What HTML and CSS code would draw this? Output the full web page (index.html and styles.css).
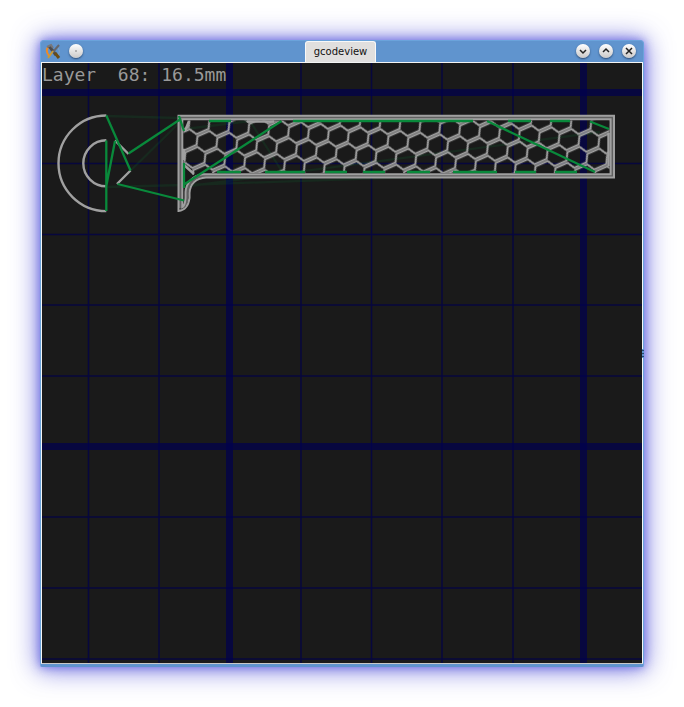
FILE: index.html
```html
<!DOCTYPE html>
<html lang="en">
<head>
<meta charset="utf-8">
<meta name="viewport" content="width=device-width, initial-scale=1">
<title>gcodeview</title>
<link rel="stylesheet" href="styles.css">
</head>
<body>
<main class="window">
  <header class="titlebar">
    <div class="controls">
      <button class="app-menu" type="button" aria-label="Window menu">
        <svg viewBox="0 0 16 16" width="16" height="16">
          <path d="M4 3C1 6 1 9 4 13" fill="none" stroke="#f08a24" stroke-width="2"/>
          <path d="M12 4c3 3 3 6 0 9" fill="none" stroke="#8fa6b8" stroke-width="1"/>
          <path d="M4 3l7 9" stroke="#4b4c50" stroke-width="3"/>
          <path d="M10 10l4 5" stroke="#6b4d14" stroke-width="3"/>
          <path d="M14 2L8 9" stroke="#66666a" stroke-width="2"/>
          <path d="M8 8l-5 7" stroke="#c99a35" stroke-width="2"/>
          <path d="M2 4l4-2 2 3" fill="none" stroke="#77777a" stroke-width="2"/>
        </svg>
      </button>
      <button class="round" type="button" aria-label="Pin">
        <svg viewBox="0 0 14 14" width="14" height="14"><rect x="6.500" y="6.500" width="1" height="1" fill="#222"/></svg>
      </button>
    </div>
    <h1 class="tab">gcodeview</h1>
    <div class="controls controls-end">
      <button class="round" type="button" aria-label="Minimize">
        <svg viewBox="0 0 14 14" width="14" height="14"><path d="M4 6l3 3 3-3"/></svg>
      </button>
      <button class="round" type="button" aria-label="Maximize">
        <svg viewBox="0 0 14 14" width="14" height="14"><path d="M4 8l3-3 3 3"/></svg>
      </button>
      <button class="round" type="button" aria-label="Close">
        <svg viewBox="0 0 14 14" width="14" height="14"><path d="M4 4l6 6M10 4l-6 6"/></svg>
      </button>
    </div>
  </header>
  <section class="viewport">
    <svg class="plot" viewBox="42 63 600 600" role="img" aria-label="Toolpath of the current layer">
      <defs>
        <!-- Honeycomb infill: two mirrored zigzag passes per tile -->
        <pattern id="comb" patternUnits="userSpaceOnUse" width="34.9" height="19.4" patternTransform="translate(298.5 132.6) rotate(-24) translate(-17.45 -9.7)">
          <path class="fill-line" transform="translate(17.45 9.7)" d="M-18-1.3H-10.8L-6.7-8.4H6.7L10.8-1.3H18M-18 1.3H-10.8L-6.7 8.4H6.7L10.8 1.3H18"/>
        </pattern>
      </defs>
      <g class="grid">
        <path class="minor" d="M88.500 63V663M159 63V663M301 63V663M371.500 63V663M442 63V663M513 63V663M42 163.500H642M42 234.500H642M42 305H642M42 376H642M42 517H642M42 588H642M42 659H642"/>
        <path class="major" d="M229.500 63V663M583.500 63V663"/>
        <path class="major" d="M42 92.500H642M42 446.500H642"/>
      </g>
      <path class="travel faint" d="M106 116L179 118M117 184L180 122M106 187L184 185L440 176M190 186L600 132M250 121L283 173M185 129L250 121"/>
      <path d="M183.500 120.500H609.500V173H204Q197 173 193 175L183.500 164Z" fill="url(#comb)"/>
      <g class="shell">
        <path class="band" d="M180.300 208V117.400H612.300V175.800H205C193 176 187 183 187 196Q187 206 180.300 208"/>
        <path d="M178.500 115.700H614V177.500H206C196 178 190 184 189.500 193V198Q188 210 178.500 211Z"/>
        <path d="M182.300 119.200H610.600V174.200H203C192 175 186 184 185.500 192V198Q185 206 182.300 207Z"/>
      </g>
      <g class="extrude">
        <path d="M106.300 115.500A47.800 47.800 0 0 0 106.300 211.100M106.300 140.300A23 23 0 0 0 106.300 186.300"/>
        <path d="M115 140.500L128.500 154M130.500 170.500L117 184M247 121.500H274M185 131L189 121M184 165L194 174M184 149V160M608.500 133V166"/>
      </g>
      <g class="travel">
        <path d="M106.300 115.500L130.500 170.500M106.300 140.500V211M106.300 186L115 141M128.500 153.500L180 119.500M117.500 184L184 200.500M179 116L184 131M184 163V188M184 184.500L281.500 121M487 121L595 172M590 121.500L609 129"/>
        <path d="M209 121H231M293 121H473M508 121H531M550 121H570M217 172H241M265 172H305M325 172H347M363 172H385M407 172H430M453 172H497M515 172H536M555 172H577"/>
      </g>
    </svg>
    <p class="status">Layer  68: 16.5mm</p>
    <span class="grip"></span>
  </section>
</main>
</body>
</html>
```
FILE: styles.css
```css
* {
  box-sizing: border-box;
}

body {
  margin: 0;
  padding: 40px;
  background: #fff;
  font-family: "DejaVu Sans", sans-serif;
}

.window {
  border: 1px solid #6ba3db;
  border-bottom: 3px solid #6094ce;
  border-radius: 4px 4px 2px 2px;
  background: #6094ce;
  box-shadow: 0 0 10px rgba(80, 80, 220, 0.7), 0 1px 26px 2px rgba(80, 80, 215, 0.75);
}

.titlebar {
  display: grid;
  grid-template-columns: 1fr auto 1fr;
  height: 21px;
  padding: 0 7px 0 4px;
}

.controls {
  display: flex;
  align-items: center;
  gap: 8px;
  padding-bottom: 2px;
}

.controls-end {
  justify-content: flex-end;
  gap: 9px;
}

button {
  display: block;
  padding: 0;
  border: 0;
  background: none;
}

button svg {
  display: block;
}

.round {
  width: 14px;
  height: 14px;
  border-radius: 50%;
  background: linear-gradient(#fff, #cbc9c8);
  box-shadow: 0 1px 2px rgba(20, 40, 70, 0.7);
}

.round path {
  fill: none;
  stroke: #222;
  stroke-width: 1.5;
}

.tab {
  margin: 0;
  padding: 0 8px;
  border: 1px solid #f8f8f8;
  border-bottom: 0;
  border-radius: 3px 3px 0 0;
  background: #e0dfde;
  color: #111;
  font-size: 10px;
  font-weight: 400;
  line-height: 20px;
}

.viewport {
  position: relative;
  border: 1px solid #f4f4f4;
  border-bottom-color: #c8c8c8;
  background: #1a1a1a;
}

.plot {
  display: block;
  width: 100%;
  fill: none;
}

.minor {
  stroke: #07073e;
  stroke-width: 1.5;
}

.major {
  stroke: rgba(0, 0, 80, 0.7);
  stroke-width: 7;
}

.fill-line {
  fill: none;
  stroke: #a2a2a2;
  stroke-width: 2;
}

.shell path,
.extrude path {
  stroke: #a0a0a0;
  stroke-width: 2;
}

.shell .band {
  stroke: #606060;
  stroke-width: 3;
}

.extrude path {
  stroke-width: 2.4;
}

.travel {
  stroke: #09893b;
  stroke-width: 2.3;
}

.faint {
  opacity: 0.14;
}

.status {
  position: absolute;
  top: 0;
  left: 0;
  margin: 0;
  color: #999;
  font-family: "DejaVu Sans Mono", monospace;
  font-size: 18px;
  line-height: 24px;
  white-space: pre;
}

.grip {
  position: absolute;
  top: 286px;
  right: -2px;
  width: 2px;
  height: 9px;
  background: repeating-linear-gradient(#6094ce 0 1px, #244a70 1px 2px, #6094ce 2px 3px);
}
```
